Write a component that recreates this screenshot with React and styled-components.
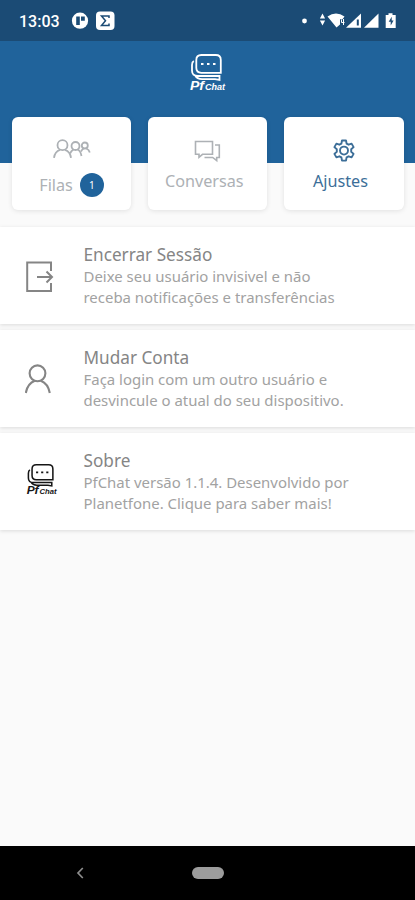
import React from "react";
import styled, { createGlobalStyle } from "styled-components";

const tabs = [
  { id: "filas", label: "Filas", badge: 1, icon: <QueueIcon /> },
  { id: "conversas", label: "Conversas", icon: <TalkIcon /> },
  { id: "ajustes", label: "Ajustes", icon: <GearIcon /> },
];

const options = [
  {
    title: "Encerrar Sessão",
    lines: ["Deixe seu usuário invisivel e não", "receba notificações e transferências"],
    icon: <ExitIcon />,
  },
  {
    title: "Mudar Conta",
    lines: ["Faça login com um outro usuário e", "desvincule o atual do seu dispositivo."],
    icon: <UserIcon />,
  },
  {
    title: "Sobre",
    lines: ["PfChat versão 1.1.4. Desenvolvido por", "Planetfone. Clique para saber mais!"],
    icon: <Logo width={34} height={34} color="#161616" />,
    raised: true,
  },
];

const App = () => {
  const active = "ajustes";

  return (
    <Screen>
      <GlobalStyle />
      <StatusBar>
        <Clock>13:03</Clock>
        <NoticeIcons />
        <SignalIcons />
      </StatusBar>
      <Header>
        <Logo width={40} height={40} color="#fff" />
      </Header>
      <Tabs>
        {tabs.map((tab) => (
          <Tab key={tab.id} $active={tab.id === active}>
            <TabIcon $lift={!!tab.badge}>{tab.icon}</TabIcon>
            <TabLabel $badge={!!tab.badge}>
              {tab.label}
              {tab.badge && <Badge>{tab.badge}</Badge>}
            </TabLabel>
          </Tab>
        ))}
      </Tabs>
      <List>
        {options.map((opt) => (
          <Option key={opt.title}>
            <OptionIcon $raised={opt.raised}>{opt.icon}</OptionIcon>
            <div>
              <Title>{opt.title}</Title>
              {opt.lines.map((line) => (
                <Line key={line}>{line}</Line>
              ))}
            </div>
          </Option>
        ))}
      </List>
      <NavBar>
        <BackIcon />
        <HomePill />
      </NavBar>
    </Screen>
  );
};

export default App;

function NoticeIcons() {
  return (
    <svg width="46" height="20" viewBox="70 11 46 20">
      <circle cx="80" cy="20.7" r="8.1" fill="#fff" />
      <path d="M76.2 16.5h3.6v8.5h-3.6zM81 16.5h3.8v4.2H81z" fill="#1b4b75" />
      <rect x="96" y="11.5" width="18.5" height="18.5" rx="4" fill="#fff" />
      <path d="M109 18v-2h-7.5l4 4.7-4 4.8h7.5v-2" fill="none" stroke="#1b4b75" strokeWidth="1.5" />
    </svg>
  );
}

function SignalIcons() {
  return (
    <Signals width="98" height="22" viewBox="300 10 98 22">
      <circle cx="304.5" cy="21" r="2.4" />
      <path d="M322.5 13.6l2.6 4.8h-5.2zM322.5 25.4l2.6-4.8h-5.2z" />
      <path d="M327.5 16.5q8.5-6 17 0l-2 2.7h-2.5v5.3l-3.5 3z" />
      <path d="M341.5 19.5v3h3M343.5 19v6" fill="none" stroke="#fff" strokeWidth="1" />
      <path d="M346 27.8L361 13.5v14.3z" />
      <path d="M356.8 19.5h2v6h-2z" fill="#1b4b75" />
      <path d="M364 27.8L378.5 13.5v14.3z" />
      <path d="M388.5 13.2h4v1.7h3.2v13h-10v-13h2.8z" />
      <path d="M391.7 16.8l-3 5h2v3.8l2.9-5h-1.9z" fill="#1b4b75" />
    </Signals>
  );
}

function Logo({ width, height, color }) {
  return (
    <svg width={width} height={height} viewBox="0 0 40 40" fill="none" stroke={color} strokeWidth="1.8">
      <path d="M8.3 15V7q0-5 5-5h14.5q5 0 5 5v12.8H13.3q-5 0-5-5" />
      <path d="M5.8 8q-1.8 1-1.8 4v5.5q0 5.5 6 5.5h21.5v4l-4.5-.8h-13q-5-.2-6.8-3.700" />
      <path d="M13 11h2.5M19 11h2.5M25 11h2.5" strokeWidth="2" />
      <LogoText x="2" y="37" fill={color} $size={12} textLength="14" lengthAdjust="spacingAndGlyphs">
        Pf
      </LogoText>
      <LogoText x="17" y="37" fill={color} $size={8.5} textLength="20" lengthAdjust="spacingAndGlyphs">
        Chat
      </LogoText>
    </svg>
  );
}

function QueueIcon() {
  return (
    <svg width="38" height="20" viewBox="0 0 38 20" fill="none" stroke="currentColor" strokeWidth="1.8">
      <circle cx="9.5" cy="6.2" r="5" />
      <path d="M1 18.8q.8-6.3 6-8M18 18.8q-.8-6.3-6-8" />
      <circle cx="22.5" cy="7" r="4" />
      <path d="M17 14.5q1.3-2.8 3.5-4M28.5 17q-.8-5-4-6.5" />
      <circle cx="31.8" cy="6.5" r="3" />
      <path d="M28 12.5q1-2 2.6-3M36.8 13.5q-.8-3-3.5-4" />
    </svg>
  );
}

function TalkIcon() {
  return (
    <svg width="27" height="23" viewBox="0 0 27 23" fill="none" stroke="currentColor" strokeWidth="1.6">
      <path d="M1.5 1.5h17v12.8h-10l-3.500 3v-3H1.5z" />
      <path d="M21 5h4.3v12.5h-2.6v3.2l-4-3.2H10.5" />
    </svg>
  );
}

function GearIcon() {
  return (
    <svg width="24" height="24" viewBox="0 0 24 24" fill="none" stroke="currentColor" strokeWidth="1.9" strokeLinejoin="round">
      <path d="M10 1.5h4l.6 3.1 2 1.1 3-1.1 2 3.5-2.4 2.1v2.6l2.4 2.1-2 3.5-3-1.1-2 1.1-.6 3.2h-4l-.6-3.2-2-1.1-3 1.1-2-3.5 2.4-2.1v-2.6L2.4 8.1l2-3.5 3 1.1 2-1.1z" />
      <circle cx="12" cy="11.6" r="4" />
    </svg>
  );
}

function ExitIcon() {
  return (
    <svg width="30" height="34" viewBox="0 0 30 34" fill="none" stroke="currentColor" strokeWidth="2">
      <path d="M26 11V2.5H2.2v28.6H26V23" />
      <path d="M12 17h14.5M21.5 11.5l5.5 5.5-5.5 5.5" />
    </svg>
  );
}

function UserIcon() {
  return (
    <svg width="28" height="32" viewBox="0 0 28 32" fill="none" stroke="currentColor" strokeWidth="2.1">
      <circle cx="12.5" cy="9.3" r="7.9" />
      <path d="M.8 29q1.7-9.5 9-12.3M24.8 29q-1.7-9.5-9-12.3" />
    </svg>
  );
}

function BackIcon() {
  return (
    <svg width="10" height="14" viewBox="0 0 10 14" fill="none" stroke="#8d8d8d" strokeWidth="1.7">
      <path d="M7.8 2L3 7l4.8 5" />
    </svg>
  );
}

const GlobalStyle = createGlobalStyle`
  * {
    box-sizing: border-box;
  }
  body {
    margin: 0;
    font-family: "Noto Sans", sans-serif;
  }
`;

const Screen = styled.div`
  display: flex;
  flex-direction: column;
  width: 415px;
  height: 900px;
  overflow: hidden;
  background-color: #fafafa;
`;

const StatusBar = styled.div`
  display: flex;
  align-items: center;
  flex: none;
  height: 41px;
  padding: 0 17px 0 19px;
  background-color: #1b4b75;
`;

const Clock = styled.div`
  width: 51px;
  color: #fff;
  font-family: Roboto, sans-serif;
  font-size: 16px;
  font-weight: 500;
  line-height: 20px;
  padding-top: 2px;
`;

const Signals = styled.svg`
  margin-left: auto;
  fill: #fff;
`;

const Header = styled.div`
  display: flex;
  justify-content: center;
  flex: none;
  height: 122px;
  padding-top: 12px;
  background-color: #20639b;
`;

const LogoText = styled.text`
  stroke: none;
  font-family: "Liberation Sans", sans-serif;
  font-size: ${(props) => props.$size}px;
  font-style: italic;
  font-weight: 700;
`;

const Tabs = styled.div`
  display: flex;
  flex: none;
  gap: 17px;
  margin-top: -46px;
  padding: 0 11.5px 0 12px;
`;

const Tab = styled.div`
  display: flex;
  flex: 1;
  flex-direction: column;
  align-items: center;
  height: 93px;
  padding-top: 21px;
  border-radius: 6px;
  background-color: #fff;
  box-shadow: 0 1px 5px rgba(0, 0, 0, 0.1);
  color: ${(props) => (props.$active ? "#3c6e98" : "#adb1b5")};
`;

const TabIcon = styled.div`
  display: flex;
  align-items: center;
  height: 26px;
  padding-bottom: ${(props) => (props.$lift ? 4 : 0)}px;
`;

const TabLabel = styled.div`
  display: flex;
  align-items: center;
  gap: 7px;
  height: 24px;
  margin-top: ${(props) => (props.$badge ? 9 : 5)}px;
  padding-right: ${(props) => (props.$badge ? 0 : 7)}px;
  font-size: 16.2px;
`;

const Badge = styled.div`
  width: 24px;
  height: 24px;
  border-radius: 50%;
  background-color: #20639b;
  color: #fff;
  font-size: 10px;
  line-height: 24px;
  text-align: center;
`;

const List = styled.div`
  display: flex;
  flex: 1;
  flex-direction: column;
  gap: 6px;
  padding-top: 17px;
`;

const Option = styled.div`
  display: flex;
  height: 97px;
  padding-top: 16px;
  background-color: #fff;
  box-shadow: 0 1px 4px rgba(0, 0, 0, 0.13);
`;

const OptionIcon = styled.div`
  display: flex;
  align-items: center;
  flex: none;
  width: 83.5px;
  height: 68px;
  padding: 0 0 ${(props) => (props.$raised ? 6 : 0)}px 25px;
  color: #858585;
`;

const Title = styled.div`
  color: #858585;
  font-size: 17.2px;
  line-height: 23px;
`;

const Line = styled.div`
  color: #a2a2a2;
  font-size: 14.95px;
  line-height: 20.5px;
  white-space: nowrap;
`;

const NavBar = styled.div`
  display: flex;
  align-items: center;
  flex: none;
  height: 54px;
  padding-left: 75px;
  background-color: #000;
`;

const HomePill = styled.div`
  width: 32px;
  height: 12px;
  margin-left: 107px;
  border-radius: 6px;
  background-color: #9c9c9c;
`;
